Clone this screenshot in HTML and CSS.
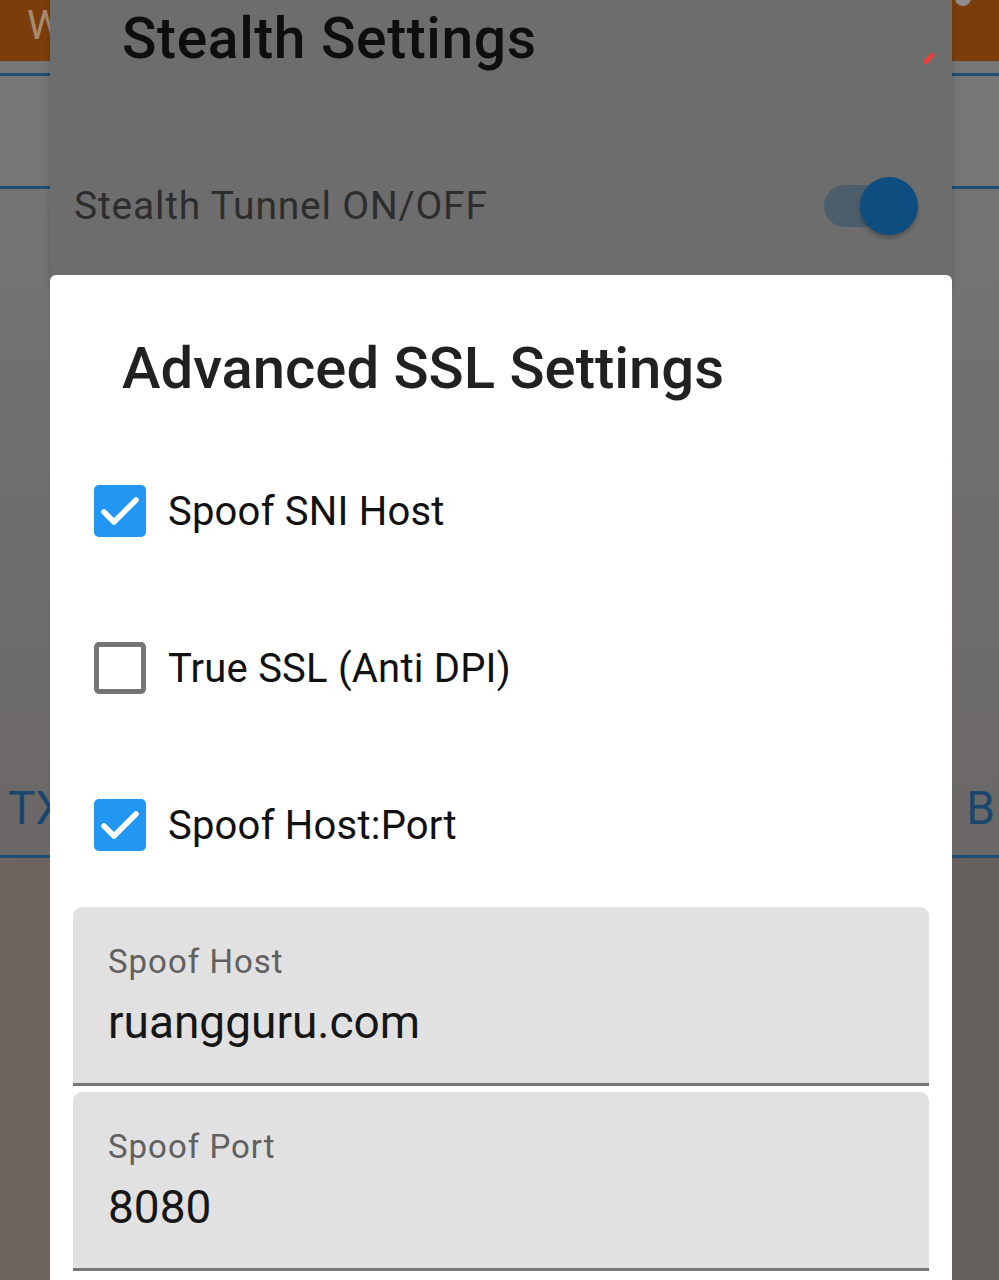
FILE: index.html
```html
<!DOCTYPE html>
<html lang="en">
<head>
  <meta charset="UTF-8">
  <meta name="viewport" content="width=device-width, initial-scale=1.0">
  <title>Advanced SSL Settings</title>
  <link rel="stylesheet" href="styles.css">
</head>
<body>

  <!-- aplikasi di belakang (sudah redup) -->
  <div class="app">
    <div class="appbar">
      <span class="appbar-title">W</span>
      <span class="appbar-dot"></span>
    </div>
    <div class="app-row row-small"></div>
    <div class="app-row row-mid"></div>
    <div class="app-row row-big">
      <span class="tab-left">TX</span>
      <span class="tab-right">B</span>
    </div>
    <div class="app-bottom"></div>
  </div>

  <!-- dialog pertama -->
  <div class="dialog-back">
    <h2 class="back-title">Stealth Settings</h2>
    <span class="red-mark"></span>
    <div class="switch-row">
      <span class="switch-label">Stealth Tunnel ON/OFF</span>
      <span class="switch">
        <span class="switch-track"></span>
        <span class="switch-thumb"></span>
      </span>
    </div>
  </div>

  <!-- dialog kedua -->
  <div class="dialog">
    <h2 class="dialog-title">Advanced SSL Settings</h2>

    <label class="check-row">
      <span class="check checked">
        <svg viewBox="0 0 52 52" width="52" height="52"><polyline points="10,27 20,37 42,15" fill="none" stroke="#fff" stroke-width="5.5" stroke-linecap="round" stroke-linejoin="round"/></svg>
      </span>
      <span class="check-text">Spoof SNI Host</span>
    </label>

    <label class="check-row">
      <span class="check"></span>
      <span class="check-text">True SSL (Anti DPI)</span>
    </label>

    <label class="check-row">
      <span class="check checked">
        <svg viewBox="0 0 52 52" width="52" height="52"><polyline points="10,27 20,37 42,15" fill="none" stroke="#fff" stroke-width="5.5" stroke-linecap="round" stroke-linejoin="round"/></svg>
      </span>
      <span class="check-text">Spoof Host:Port</span>
    </label>

    <div class="field">
      <span class="field-label">Spoof Host</span>
      <span class="field-value">ruangguru.com</span>
    </div>
    <div class="field">
      <span class="field-label">Spoof Port</span>
      <span class="field-value">8080</span>
    </div>
  </div>

</body>
</html>
```

FILE: styles.css
```css
* {
  margin: 0;
  padding: 0;
  box-sizing: border-box;
}

body {
  font-family: Roboto, "Noto Sans", Arial, sans-serif;
  width: 999px;
  height: 1280px;
  overflow: hidden;
  position: relative;
  background: #6b6260;
}

/* aplikasi di belakang */
.app {
  display: flex;
  flex-direction: column;
  height: 100%;
}

.appbar {
  height: 61px;
  background: #7b3d0b;
  position: relative;
}

.appbar-title {
  position: absolute;
  left: 27px;
  top: 2px;
  font-size: 40px;
  color: #a88a72;
}

.appbar-dot {
  position: absolute;
  right: 28px;
  top: -10px;
  width: 16px;
  height: 16px;
  border-radius: 50%;
  background: #8c8c8c;
}

.app-row {
  border-bottom: 3px solid #1d4c74;
  background: #767676;
}

.row-small {
  height: 15px;
}

.row-mid {
  height: 113px;
}

.row-big {
  height: 669px;
  background: linear-gradient(#747474, #6a6766);
  position: relative;
}

.tab-left,
.tab-right {
  position: absolute;
  bottom: 20px;
  font-size: 46px;
  color: #18466e;
}

.tab-left {
  left: 8px;
}

.tab-right {
  right: 4px;
}

.app-bottom {
  flex: 1;
  background: linear-gradient(90deg, #6e6460, #65605e);
}

/* dialog pertama */
.dialog-back {
  position: absolute;
  left: 50px;
  top: 0;
  width: 902px;
  height: 290px;
  background: #6d6d6d;
  box-shadow: 0 0 6px rgba(0, 0, 0, 0.2);
}

.back-title {
  font-size: 57px;
  font-weight: 500;
  color: #0e0e0e;
  padding-left: 72px;
  line-height: 1;
  margin-top: 10px;
  letter-spacing: 0.6px;
}

.red-mark {
  position: absolute;
  left: 872px;
  top: 56px;
  width: 14px;
  height: 5px;
  background: #e8403c;
  border-radius: 3px;
  transform: rotate(-45deg);
}

.switch-row {
  display: flex;
  align-items: center;
  justify-content: space-between;
  padding: 0 32px 0 24px;
  margin-top: 110px;
}

.switch-label {
  font-size: 39px;
  color: #2d2d2d;
  letter-spacing: 0.8px;
}

.switch {
  position: relative;
  width: 96px;
  height: 58px;
}

.switch-track {
  position: absolute;
  left: 0;
  top: 8px;
  width: 62px;
  height: 42px;
  border-radius: 21px;
  background: #4c5e6c;
}

.switch-thumb {
  position: absolute;
  right: 2px;
  top: 0;
  width: 58px;
  height: 58px;
  border-radius: 50%;
  background: #0d4d80;
  box-shadow: 0 3px 4px rgba(0, 0, 0, 0.25);
}

/* dialog kedua */
.dialog {
  position: absolute;
  left: 50px;
  top: 275px;
  width: 902px;
  bottom: 0;
  background: #fff;
  border-radius: 6px 6px 0 0;
  padding: 0 23px;
}

.dialog-title {
  font-size: 58px;
  font-weight: 500;
  color: #212121;
  padding-left: 49px;
  margin-top: 64px;
  line-height: 1;
  margin-bottom: 88px;
}

.check-row {
  display: flex;
  align-items: center;
  gap: 22px;
  padding-left: 21px;
  height: 52px;
  margin-bottom: 105px;
}

.check-row:nth-of-type(3) {
  margin-bottom: 56px;
}

.check {
  width: 52px;
  height: 52px;
  border-radius: 5px;
  border: 5px solid #757575;
  flex-shrink: 0;
  position: relative;
}

.check.checked {
  border: none;
  background: #2196f3;
}

.check svg {
  display: block;
}

.check-text {
  font-size: 40px;
  color: #111;
  letter-spacing: 0.2px;
}

.field {
  display: flex;
  flex-direction: column;
  background: #e1e1e1;
  border-radius: 9px 9px 0 0;
  border-bottom: 3px solid #777;
  height: 179px;
  padding: 38px 35px 0;
  margin-bottom: 6px;
}

.field-label {
  font-size: 33px;
  color: #606060;
  line-height: 1;
  letter-spacing: 1px;
}

.field-value {
  font-size: 46px;
  color: #161616;
  margin-top: 21px;
  line-height: 1;
}
```
